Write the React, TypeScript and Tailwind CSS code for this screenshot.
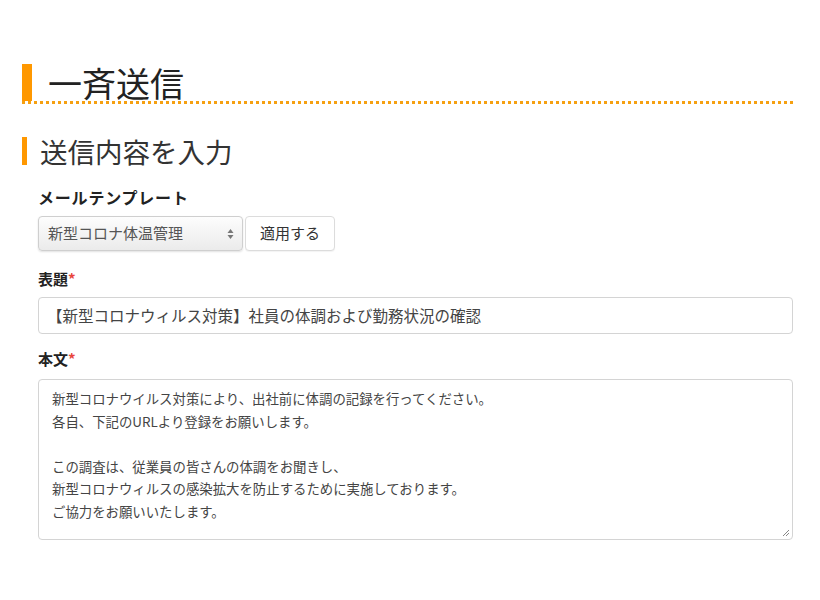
import React from "react";

const jp = { fontFamily: '"Noto Sans CJK JP", "Noto Sans", sans-serif' };

function Arrows() {
  return (
    <svg width="7" height="12" viewBox="0 0 7 12" className="absolute right-[8px] top-1/2 -translate-y-1/2">
      <path d="M3.5 1 L6.5 5 L0.5 5 Z" fill="#777" />
      <path d="M3.5 11 L6.5 7 L0.5 7 Z" fill="#777" />
    </svg>
  );
}

export default function App() {
  return (
    <div className="w-[820px] h-[600px] bg-white pt-[64px] pl-[22px] pr-[27px]" style={jp}>
      <div className="border-b-[3px] border-dotted border-[#f5a011]">
        <div className="flex items-end h-[37px]">
          <div className="w-[10px] h-[37px] bg-[#ff9800]" />
          <h1 className="ml-[16px] text-[34px] leading-[37px] text-[#222] font-normal">一斉送信</h1>
        </div>
      </div>

      <div className="mt-[33px] flex items-center h-[28px]">
        <div className="w-[5px] h-[28px] bg-[#ff9800]" />
        <h2 className="ml-[13px] text-[27.5px] leading-[28px] text-[#333] font-normal">送信内容を入力</h2>
      </div>

      <div className="pl-[16px]">
        <div className="mt-[21px] text-[16px] leading-[22px] font-bold text-[#222] tracking-[0.8px]">メールテンプレート</div>
        <div className="mt-[8px] flex gap-[2px]">
          <div className="relative w-[205px] h-[35px] rounded-[4px] border border-[#cfcfcf] bg-gradient-to-b from-[#fdfdfd] to-[#ebebeb] shadow-[0_1px_2px_rgba(0,0,0,0.12)] flex items-center pl-[9px] text-[15px] text-[#555]">
            新型コロナ体温管理
            <Arrows />
          </div>
          <button className="w-[90px] h-[35px] rounded-[4px] border border-[#dcdcdc] bg-white text-[15px] text-[#333] shadow-[0_1px_1px_rgba(0,0,0,0.05)]">
            適用する
          </button>
        </div>

        <div className="mt-[17px] text-[15px] leading-[22px] font-bold text-[#222]">
          表題<span className="text-[#e8453c]">*</span>
        </div>
        <div className="mt-[7px] h-[37px] rounded-[4px] border border-[#d4d4d4] flex items-center pl-[8px] text-[15.5px] text-[#444]">
          【新型コロナウィルス対策】社員の体調および勤務状況の確認
        </div>

        <div className="mt-[14px] text-[15px] leading-[22px] font-bold text-[#222]">
          本文<span className="text-[#e8453c]">*</span>
        </div>
        <div className="relative mt-[9px] h-[161px] rounded-[4px] border border-[#d4d4d4] pl-[13px] pt-[7px] text-[13.4px] leading-[22.5px] text-[#444]">
          <div>新型コロナウイルス対策により、出社前に体調の記録を行ってください。</div>
          <div>各自、下記のURLより登録をお願いします。</div>
          <div>&nbsp;</div>
          <div>この調査は、従業員の皆さんの体調をお聞きし、</div>
          <div>新型コロナウィルスの感染拡大を防止するために実施しております。</div>
          <div>ご協力をお願いいたします。</div>
          <svg width="8" height="8" viewBox="0 0 8 8" className="absolute right-[2px] bottom-[2px]">
            <path d="M7 1 L1 7 M7 4 L4 7" stroke="#888" strokeWidth="1" />
          </svg>
        </div>
      </div>
    </div>
  );
}
